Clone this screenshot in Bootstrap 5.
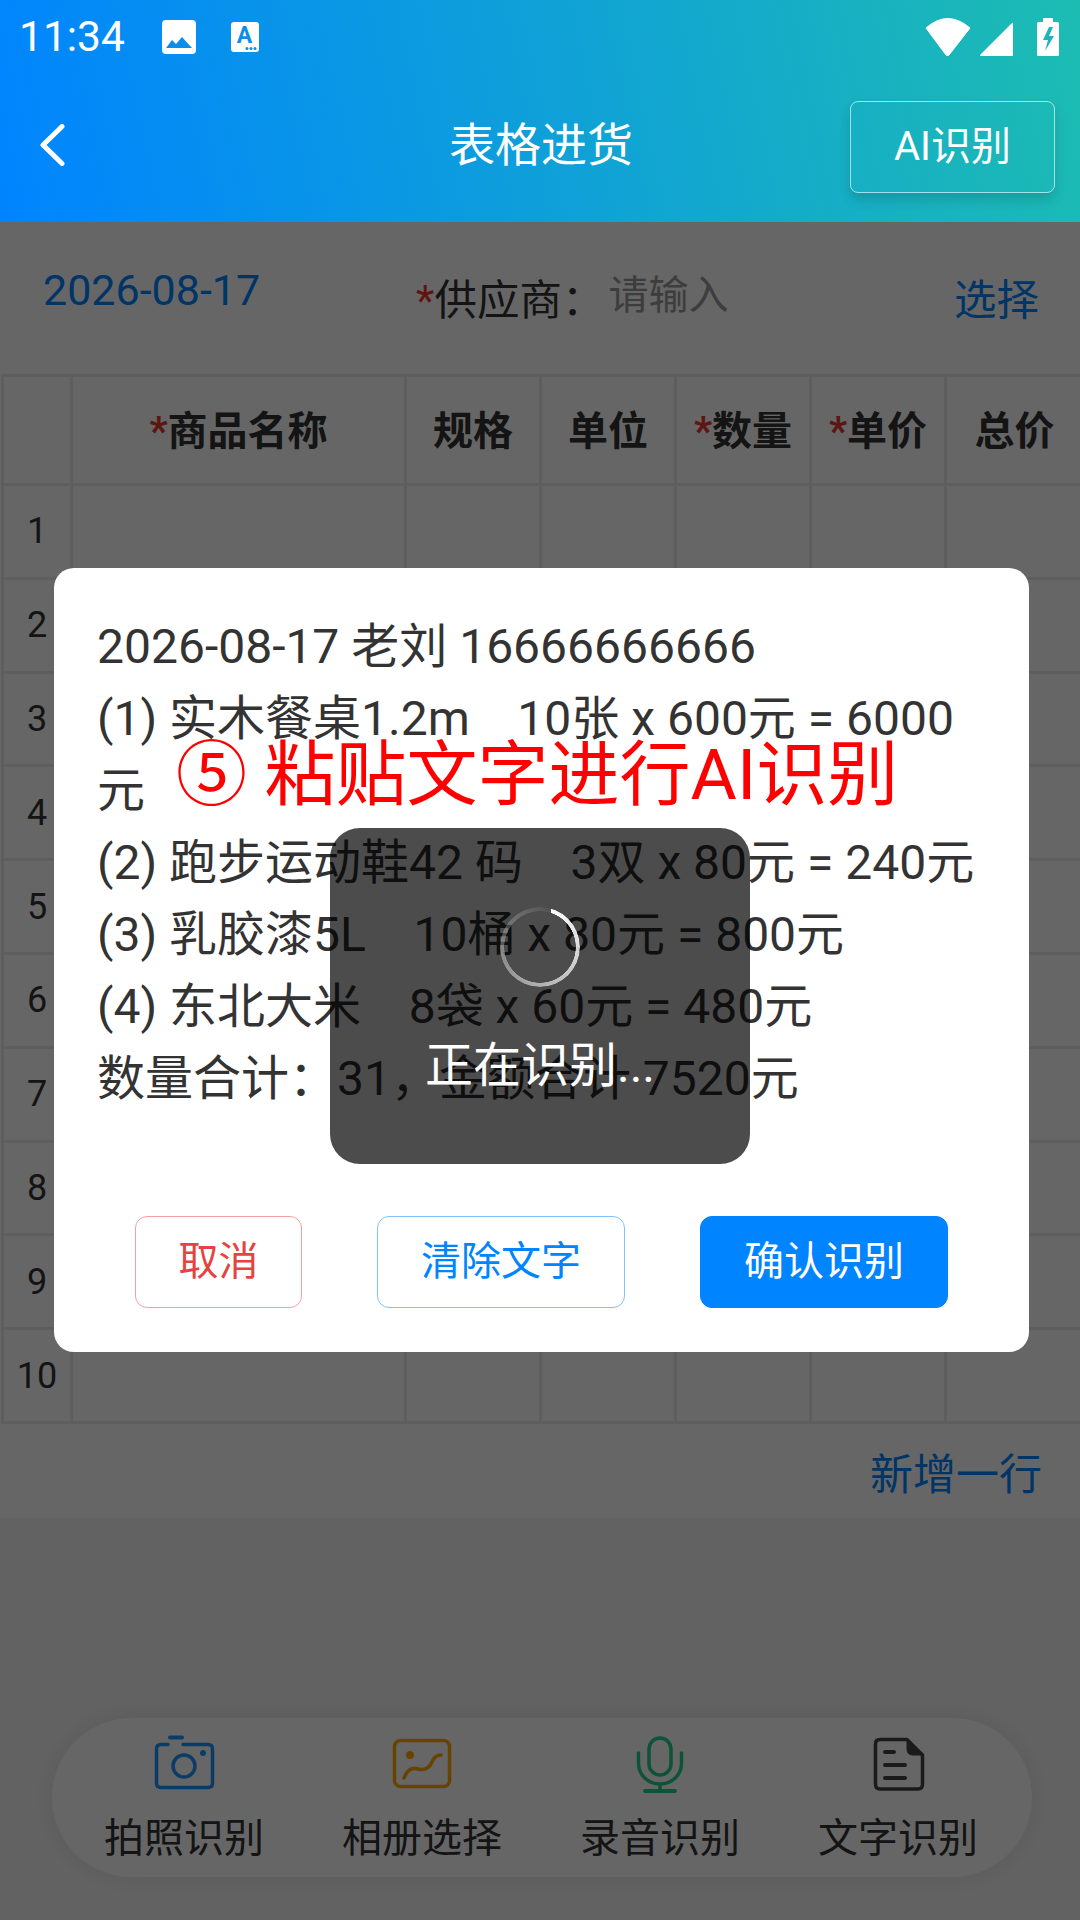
<!DOCTYPE html>
<html lang="zh-CN">

<head>
    <meta charset="UTF-8">
    <meta name="viewport" content="width=device-width, initial-scale=1.0">
    <title>表格进货</title>
    <link href="https://cdn.jsdelivr.net/npm/bootstrap@5.3.0/dist/css/bootstrap.min.css" rel="stylesheet">

<style>
        /* Page */
        body {
            margin: 0;
            background-color: #f5f5f5;
            font-family: Roboto, "Noto Sans CJK SC", sans-serif;
            color: #333;
        }

        .page-wrap {
            position: relative;
            width: 1080px;
            height: 1920px;
            overflow: hidden;
        }

        /* Header With Status Bar */
        .app-header {
            position: relative;
            z-index: 10;
            height: 222px;
            background: linear-gradient(78deg, #0084ff, #1dbcb2);
            color: #fff;
        }

        .status-bar {
            height: 74px;
            padding: 0 19px 0 19px;
        }

        .status-time {
            font-size: 42.500px;
            line-height: 74px;
            width: 143px;
        }

        .status-note {
            margin-left: 35px;
        }

        .status-signal {
            margin-top: -3px;
        }

        .nav-row {
            height: 148px;
        }

        .nav-side {
            flex: 1 1 0;
        }

        .back-arrow {
            margin-left: 39px;
            margin-top: -6px;
        }

        .nav-title {
            font-size: 46px;
            line-height: 60px;
            margin-top: -7px;
            margin-left: 2px;
        }

        .ai-btn {
            width: 205px;
            height: 92px;
            margin-right: 25px;
            margin-top: -2px;
            padding: 0;
            font-size: 40px;
            color: #fff;
            border: 1px solid rgba(255, 255, 255, .6);
            border-radius: 8px;
            box-shadow: 0 7px 12px rgba(0, 0, 0, .14);
        }

        /* Date And Supplier Row */
        .form-area {
            background-color: #fff;
            height: 152px;
            padding: 40px 41px 0 43px;
        }

        .date-text {
            font-size: 43px;
            line-height: 56px;
            color: #0084ff;
        }

        .supplier-group {
            margin-left: 156px;
            margin-top: 11px;
            font-size: 42.500px;
            line-height: 56px;
        }

        .star-mark {
            color: #e8392f;
        }

        .input-hint {
            margin-left: 4px;
            margin-top: -5px;
            font-size: 40px;
            color: #999;
        }

        .pick-link {
            margin-left: auto;
            margin-top: 11px;
            font-size: 42.500px;
            line-height: 56px;
            color: #0084ff;
        }

        /* Goods Table */
        .goods-area {
            background-color: #fff;
            height: 1144px;
            padding-left: 1px;
        }

        .goods-table {
            width: 1081px;
            margin: 0;
            table-layout: fixed;
            border-collapse: collapse;
            --bs-table-color: #333;
        }

        .goods-table th,
        .goods-table td {
            border: 3px solid #ebebeb;
            padding: 0;
            text-align: center;
            vertical-align: middle;
        }

        .goods-table th {
            height: 109px;
            padding-top: 4px;
            font-size: 40px;
            font-weight: 700;
        }

        .goods-table td {
            height: 93.800px;
        }

        .row-no {
            font-size: 36px;
        }

        .add-line {
            height: 102px;
            padding-right: 38px;
            font-size: 43px;
            color: #0084ff;
        }

        /* Bottom Tool Bar */
        .tool-bar {
            position: absolute;
            left: 52px;
            top: 1718px;
            width: 980px;
            height: 159px;
            padding: 16px 15px 0 13px;
            background-color: #fff;
            border-radius: 80px;
            box-shadow: 0 0 24px rgba(0, 0, 0, .08);
        }

        .tool-item {
            flex: 1 1 0;
        }

        .tool-label {
            margin-top: 17px;
            font-size: 40px;
            line-height: 56px;
        }

        /* Dim Layer And Dialog */
        .dim-layer {
            position: absolute;
            inset: 0;
            z-index: 5;
            background-color: rgba(0, 0, 0, .6);
        }

        .text-dialog {
            width: 975px;
            height: 784px;
            margin-left: 3px;
            padding: 43px 43px 44px;
            background-color: #fff;
            border-radius: 20px;
        }

        .dialog-text {
            height: 504px;
            font-size: 48px;
            line-height: 72px;
            white-space: pre-wrap;
            color: #333;
        }

        .dialog-actions {
            margin-top: 101px;
            padding: 0 38px;
        }

        .dialog-btn {
            height: 92px;
            padding: 0;
            font-size: 40px;
            border-radius: 12px;
        }

        .btn-cancel {
            width: 167px;
            color: #e64340;
            border: 1px solid #f3a19f;
        }

        .btn-clear {
            width: 248px;
            color: #0084ff;
            border: 1px solid #80c2ff;
        }

        .btn-confirm {
            width: 248px;
            color: #fff;
            background-color: #0084ff;
            border: 1px solid #0084ff;
        }

        /* Loading Box Over The Dialog */
        .loading-box {
            position: absolute;
            left: 330px;
            top: 828px;
            width: 420px;
            height: 336px;
            z-index: 7;
            padding-top: 79px;
            background-color: rgba(0, 0, 0, .7);
            border-radius: 30px;
            color: #fff;
        }

        .spin-ring {
            width: 80px;
            height: 80px;
            border-radius: 50%;
            background: conic-gradient(from 17deg, #fff, rgba(255, 255, 255, .04));
            -webkit-mask: radial-gradient(circle, transparent 35.500px, #000 36px);
            mask: radial-gradient(circle, transparent 35.500px, #000 36px);
        }

        .loading-text {
            margin-top: 47px;
            font-size: 48px;
            line-height: 64px;
        }

        /* Red Caption Laid Over The Screenshot */
        .red-caption {
            position: absolute;
            left: 176px;
            top: 728px;
            z-index: 8;
            font-size: 71px;
            line-height: 94px;
            color: #f00;
            white-space: nowrap;
        }
</style>
</head>

<body>
    <div class="page-wrap">

        <!-- Header -->
        <header class="app-header">
            <div class="status-bar d-flex align-items-center">
                <span class="status-time">11:34</span>
                <svg width="34" height="34" viewBox="0 0 34 34">
                    <rect width="34" height="34" rx="4" fill="#fff"/>
                    <path d="M4 28 L10 20 L14 24 L20 17 L30 28Z" fill="#0a8ee9"/>
                </svg>
                <svg width="28" height="30" viewBox="0 0 28 30" class="status-note">
                    <rect width="28" height="30" rx="3" fill="#fff"/>
                    <text x="13.500" y="21" text-anchor="middle" font-family="Roboto, sans-serif" font-size="23" font-weight="700" fill="#0a8ee9">A</text>
                    <circle cx="16" cy="26.500" r="1.500" fill="#0a8ee9"/>
                    <circle cx="20" cy="26.500" r="1.500" fill="#0a8ee9"/>
                    <circle cx="24" cy="26.500" r="1.500" fill="#0a8ee9"/>
                </svg>
                <svg width="136" height="42" viewBox="0 0 136 42" class="ms-auto status-signal">
                    <path d="M1 13 Q22.500 -6 45 13 L24 40 Q22.500 41 21 40Z" fill="#fff" stroke="#fff" stroke-linejoin="round"/>
                    <path d="M55 40 L87 8 Q88 7 88 9 L88 41 L55 41Z" fill="#fff"/>
                    <rect x="118" y="3" width="10" height="5" fill="#fff"/>
                    <rect x="112" y="7" width="22" height="34" rx="1.500" fill="#fff"/>
                    <path d="M124 12 L118 25 L123 25 L120 36 L129 21 L124 21 L128 12Z" fill="#1bb5bb"/>
                </svg>
            </div>
            <div class="nav-row d-flex align-items-center">
                <div class="nav-side">
                    <svg class="back-arrow d-block" width="26" height="42" viewBox="0 0 26 42">
                        <path d="M23 2.500 L4 21 L23 39.500" fill="none" stroke="#fff" stroke-width="5" stroke-linecap="round" stroke-linejoin="round"/>
                    </svg>
                </div>
                <div class="nav-title">表格进货</div>
                <div class="nav-side d-flex justify-content-end">
                    <button type="button" class="btn ai-btn">AI识别</button>
                </div>
            </div>
        </header>

        <!-- Date And Supplier -->
        <div class="form-area d-flex align-items-start">
            <span class="date-text">2026-08-17</span>
            <div class="supplier-group d-flex align-items-start">
                <span><span class="star-mark">*</span>供应商：</span>
                <span class="input-hint">请输入</span>
            </div>
            <span class="pick-link">选择</span>
        </div>

        <!-- Goods Table -->
        <div class="goods-area">
            <table class="table goods-table">
                <colgroup>
                    <col style="width: 69px">
                    <col style="width: 334px">
                    <col style="width: 135px">
                    <col style="width: 135px">
                    <col style="width: 135px">
                    <col style="width: 135px">
                    <col style="width: 138px">
                </colgroup>
                <thead>
                    <tr>
                        <th></th>
                        <th><span class="star-mark">*</span>商品名称</th>
                        <th>规格</th>
                        <th>单位</th>
                        <th><span class="star-mark">*</span>数量</th>
                        <th><span class="star-mark">*</span>单价</th>
                        <th>总价</th>
                    </tr>
                </thead>
                <tbody id="goodsRows"></tbody>
            </table>
            <div class="add-line d-flex align-items-center justify-content-end">新增一行</div>
        </div>

        <!-- Bottom Tools -->
        <nav class="tool-bar d-flex">
            <div class="tool-item d-flex flex-column align-items-center">
                <svg width="70" height="60" viewBox="0 0 70 60">
                    <path d="M21 3.500 H33" stroke="#1e96ff" stroke-width="4" stroke-linecap="round" fill="none"/>
                    <path d="M19 10.500 H12 Q7.500 10.500 7.500 15 V49 Q7.500 53.500 12 53.500 H59 Q63.500 53.500 63.500 49 V15 Q63.500 10.500 59 10.500 H34" fill="none" stroke="#1e96ff" stroke-width="3.500" stroke-linecap="round"/>
                    <circle cx="35" cy="32" r="11" fill="none" stroke="#1e96ff" stroke-width="3.500"/>
                    <circle cx="54" cy="19" r="3" fill="#1e96ff"/>
                </svg>
                <span class="tool-label">拍照识别</span>
            </div>
            <div class="tool-item d-flex flex-column align-items-center">
                <svg width="70" height="60" viewBox="0 0 70 60">
                    <rect x="7.500" y="6.500" width="55" height="46" rx="6" fill="none" stroke="#ffaa00" stroke-width="3.500"/>
                    <circle cx="23" cy="21" r="4" fill="#ffaa00"/>
                    <path d="M17 44 C20 36 25 33 31 35 C38 37 43 33 45 28 C47 23 50 21 54 21" fill="none" stroke="#ffaa00" stroke-width="3.500" stroke-linecap="round"/>
                </svg>
                <span class="tool-label">相册选择</span>
            </div>
            <div class="tool-item d-flex flex-column align-items-center">
                <svg width="70" height="60" viewBox="0 0 70 60">
                    <rect x="24" y="4" width="22" height="37" rx="11" fill="none" stroke="#1fd08a" stroke-width="3.500"/>
                    <path d="M13.500 19 V29 C13.500 41 23 50 35 50 C47 50 56.500 41 56.500 29 V19" fill="none" stroke="#1fd08a" stroke-width="3.500" stroke-linecap="round"/>
                    <path d="M35 50 V57" stroke="#1fd08a" stroke-width="3.500"/>
                    <path d="M20 57 H50" stroke="#1fd08a" stroke-width="4" stroke-linecap="round"/>
                </svg>
                <span class="tool-label">录音识别</span>
            </div>
            <div class="tool-item d-flex flex-column align-items-center">
                <svg width="70" height="60" viewBox="0 0 70 60">
                    <path d="M17 5.500 H44 L59.500 21 V50 Q59.500 55 55 55 H17 Q12.500 55 12.500 50 V10 Q12.500 5.500 17 5.500Z" fill="none" stroke="#444" stroke-width="3.500" stroke-linejoin="round"/>
                    <path d="M44 5.500 V15 Q44 21 50 21 H59.500Z" fill="#444" stroke="#444" stroke-width="1"/>
                    <path d="M22 18 H31 M22 31 H42 M22 44 H42" stroke="#444" stroke-width="4" stroke-linecap="round" fill="none"/>
                </svg>
                <span class="tool-label">文字识别</span>
            </div>
        </nav>

        <!-- Dim Layer With Dialog -->
        <div class="dim-layer d-flex align-items-center justify-content-center">
            <div class="text-dialog">
                <div class="dialog-text">2026-08-17 老刘 16666666666
(1) 实木餐桌1.2m    10张 x 600元 = 6000元
(2) 跑步运动鞋42 码    3双 x 80元 = 240元
(3) 乳胶漆5L    10桶 x 80元 = 800元
(4) 东北大米    8袋 x 60元 = 480元
数量合计：31，金额合计 7520元</div>
                <div class="dialog-actions d-flex justify-content-between">
                    <button type="button" class="btn dialog-btn btn-cancel">取消</button>
                    <button type="button" class="btn dialog-btn btn-clear">清除文字</button>
                    <button type="button" class="btn dialog-btn btn-confirm">确认识别</button>
                </div>
            </div>
        </div>

        <!-- Loading Box -->
        <div class="loading-box d-flex flex-column align-items-center">
            <div class="spin-ring"></div>
            <div class="loading-text">正在识别...</div>
        </div>

        <div class="red-caption">⑤ 粘贴文字进行AI识别</div>
    </div>

    <script src="https://cdn.jsdelivr.net/npm/bootstrap@5.3.0/dist/js/bootstrap.bundle.min.js"></script>

    <script>
        // Build The Ten Empty Goods Rows
        const goodsRows = document.getElementById('goodsRows');
        for (let i = 1; i <= 10; i++) {
            const row = document.createElement('tr');
            row.innerHTML = `<td class="row-no">${i}</td><td></td><td></td><td></td><td></td><td></td><td></td>`;
            goodsRows.appendChild(row);
        }
    </script>

</body>

</html>
